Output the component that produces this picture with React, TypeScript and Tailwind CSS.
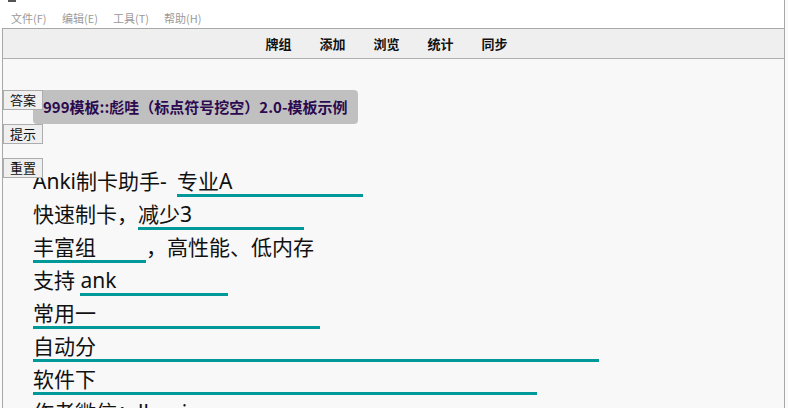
import { FC } from "react";

const cjk = "font-['Noto_Sans_CJK_SC',sans-serif]";
const body = "font-['Noto_Sans','Noto_Sans_CJK_SC',sans-serif]";

const menus = ["文件(F)", "编辑(E)", "工具(T)", "帮助(H)"];
const tabs = ["牌组", "添加", "浏览", "统计", "同步"];
const buttons = ["答案", "提示", "重置"];

const Cloze: FC<{ text: string; width: number }> = ({ text, width }) => (
  <span
    className="inline-block border-b-[3px] border-[#009999] leading-[26px]"
    style={{ width }}
  >
    {text}
  </span>
);

const Plain: FC<{ text: string; width?: number }> = ({ text, width }) => (
  <span className="inline-block whitespace-pre pb-[3px] leading-[26px]" style={{ width }}>
    {text}
  </span>
);

export default function App() {
  return (
    <div className="flex h-[408px] w-[788px] flex-col overflow-hidden bg-[#fafafa]">
      <div className={`relative flex h-[28px] w-[785px] flex-none items-center border-r border-[#a8a8a8] bg-white pl-[11px] pt-[8px] text-[11px] text-[#9a9a9a] ${cjk}`}>
        <div className="absolute left-[8px] top-0 h-[2px] w-[8px] bg-[#555]" />
        {menus.map((m) => (
          <span key={m} className="w-[51px] whitespace-nowrap">
            {m}
          </span>
        ))}
      </div>
      <div className="ml-[2px] flex w-[783px] flex-1 flex-col border-x border-t border-[#a8a8a8] bg-[#f8f8f8]">
        <div className={`flex h-[30px] flex-none items-center justify-center border-b border-[#b0b0b0] bg-[#efefef] pr-[14px] text-[13px] font-bold text-[#111] ${cjk}`}>
          {tabs.map((t) => (
            <span key={t} className="px-[14px]">
              {t}
            </span>
          ))}
        </div>
        <div className="relative flex-1 pl-[30px] pt-[31px]">
          <div className={`absolute left-0 top-[31px] flex flex-col gap-[14px] ${cjk}`}>
            {buttons.map((b) => (
              <button
                key={b}
                className="h-[20px] w-[40px] border border-[#adadad] bg-[#efefef] text-[13px] leading-[18px] text-[#111]"
              >
                {b}
              </button>
            ))}
          </div>
          <div className={`inline-flex h-[34px] w-[325px] items-center rounded-[4px] bg-[#c0c0c0] pl-[10px] text-[15px] font-bold text-[#2b0a4f] ${cjk}`}>
            999模板::彪哇（标点符号挖空）2.0-模板示例
          </div>
          <div className={`mt-[40px] text-[21px] text-[#111] ${body}`}>
            <div className="flex h-[33px] items-end">
              <Plain text="Anki制卡助手- " width={144} />
              <Cloze text="专业A" width={186} />
            </div>
            <div className="flex h-[33px] items-end">
              <Plain text="快速制卡，" />
              <Cloze text="减少3" width={166} />
            </div>
            <div className="flex h-[33px] items-end">
              <Cloze text="丰富组" width={113} />
              <Plain text="，高性能、低内存" />
            </div>
            <div className="flex h-[33px] items-end">
              <Plain text="支持 " />
              <Cloze text="ank" width={148} />
            </div>
            <div className="flex h-[33px] items-end">
              <Cloze text="常用一" width={287} />
            </div>
            <div className="flex h-[33px] items-end">
              <Cloze text="自动分" width={566} />
            </div>
            <div className="flex h-[33px] items-end">
              <Cloze text="软件下" width={504} />
            </div>
            <div className="flex h-[33px] items-end">
              <Plain text="作者微信：llwwi" />
            </div>
          </div>
        </div>
      </div>
    </div>
  );
}
